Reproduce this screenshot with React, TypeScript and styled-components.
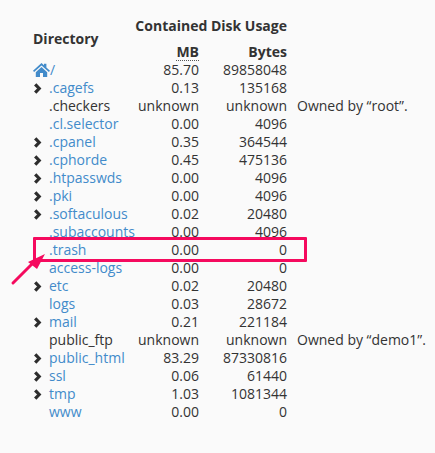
import React from 'react';
import styled, { createGlobalStyle } from 'styled-components';

const GlobalStyle = createGlobalStyle`
  html, body {
    margin: 0;
    padding: 0;
    background: #fafafa;
  }
  body {
    font-family: "Open Sans", sans-serif;
    font-size: 14px;
    color: #333;
  }
`;

const Page = styled.div`
  position: relative;
  width: 435px;
  height: 453px;
  overflow: hidden;
  padding: 17px 0 0 33px;
  box-sizing: border-box;
`;

const UsageTable = styled.table`
  border-collapse: collapse;
  table-layout: fixed;
  width: 402px;
`;

const HeadCell = styled.th<{ $align?: string }>`
  padding: 0;
  height: 18px;
  line-height: 18px;
  font-weight: 700;
  color: #333;
  text-align: ${props => props.$align || 'right'};
  white-space: nowrap;
`;

const SpacerRow = styled.tr`
  height: 8px;
`;

const SpacerCell = styled.th`
  padding: 0;
  height: 8px;
  line-height: 0;
`;

const Unit = styled.span<{ $dotted?: boolean }>`
  display: inline-block;
  line-height: 17px;
  border-bottom: 1px dotted ${props => (props.$dotted ? '#555' : 'transparent')};
`;

const Row = styled.tr`
  height: 18px;
`;

const NameCell = styled.td`
  padding: 0;
  line-height: 18px;
  white-space: nowrap;
`;

const NameWrap = styled.div`
  display: flex;
  align-items: center;
  height: 18px;
`;

const IconSlot = styled.span`
  display: flex;
  align-items: center;
  width: 16px;
  flex: none;
`;

const DirLink = styled.a<{ $plain?: boolean }>`
  color: ${props => (props.$plain ? '#333' : '#428bca')};
  text-decoration: none;
`;

const NumCell = styled.td`
  padding: 0;
  line-height: 18px;
  text-align: right;
  white-space: nowrap;
`;

const NoteCell = styled.td`
  padding: 0 0 0 10px;
  line-height: 18px;
  white-space: nowrap;
`;

const Highlight = styled.div`
  position: absolute;
  left: 33px;
  top: 237px;
  width: 274px;
  height: 25px;
  box-sizing: border-box;
  border: 3px solid #f50a5e;
  border-radius: 1px;
`;

const ArrowMark = styled.svg`
  position: absolute;
  left: 10px;
  top: 250px;
`;

const Chevron = () => (
  <svg width="9" height="11" viewBox="0 0 9 11">
    <path d="M2.2 1.3 L6.2 5.5 L2.2 9.7" fill="none" stroke="#2d2d2d" strokeWidth="3.2" />
  </svg>
);

const HomeIcon = () => (
  <svg width="17" height="14" viewBox="0 0 17 14">
    <path
      fill="#428bca"
      d="M8.5 0 L11 2.3 V0.8 H13.4 V4.5 L17 7.8 L15.9 9.1 L8.5 2.4 L1.1 9.1 L0 7.8 Z M2.8 9.2 L8.5 4 L14.2 9.2 V14 H10 V10 H7 V14 H2.8 Z"
    />
  </svg>
);

type Dir = {
  name: string;
  mb: string;
  bytes: string;
  expand?: boolean;
  plain?: boolean;
  note?: string;
};

const dirs: Dir[] = [
  { name: '.cagefs', mb: '0.13', bytes: '135168', expand: true },
  { name: '.checkers', mb: 'unknown', bytes: 'unknown', plain: true, note: 'Owned by “root”.' },
  { name: '.cl.selector', mb: '0.00', bytes: '4096' },
  { name: '.cpanel', mb: '0.35', bytes: '364544', expand: true },
  { name: '.cphorde', mb: '0.45', bytes: '475136', expand: true },
  { name: '.htpasswds', mb: '0.00', bytes: '4096', expand: true },
  { name: '.pki', mb: '0.00', bytes: '4096', expand: true },
  { name: '.softaculous', mb: '0.02', bytes: '20480', expand: true },
  { name: '.subaccounts', mb: '0.00', bytes: '4096' },
  { name: '.trash', mb: '0.00', bytes: '0' },
  { name: 'access-logs', mb: '0.00', bytes: '0' },
  { name: 'etc', mb: '0.02', bytes: '20480', expand: true },
  { name: 'logs', mb: '0.03', bytes: '28672' },
  { name: 'mail', mb: '0.21', bytes: '221184', expand: true },
  { name: 'public_ftp', mb: 'unknown', bytes: 'unknown', plain: true, note: 'Owned by “demo1”.' },
  { name: 'public_html', mb: '83.29', bytes: '87330816', expand: true },
  { name: 'ssl', mb: '0.06', bytes: '61440', expand: true },
  { name: 'tmp', mb: '1.03', bytes: '1081344', expand: true },
  { name: 'www', mb: '0.00', bytes: '0' },
];

export default function App() {
  return (
    <>
      <GlobalStyle />
      <Page>
        <UsageTable>
          <colgroup>
            <col style={{ width: 100 }} />
            <col style={{ width: 66 }} />
            <col style={{ width: 88 }} />
            <col />
          </colgroup>
          <thead>
            <tr>
              <HeadCell $align="left" rowSpan={3}>Directory</HeadCell>
              <HeadCell colSpan={2}>Contained Disk Usage</HeadCell>
              <HeadCell />
            </tr>
            <SpacerRow>
              <SpacerCell />
              <SpacerCell />
              <SpacerCell />
            </SpacerRow>
            <tr>
              <HeadCell><Unit $dotted>MB</Unit></HeadCell>
              <HeadCell><Unit>Bytes</Unit></HeadCell>
              <HeadCell />
            </tr>
          </thead>
          <tbody>
            <Row>
              <NameCell>
                <NameWrap>
                  <HomeIcon />
                  <DirLink>/</DirLink>
                </NameWrap>
              </NameCell>
              <NumCell>85.70</NumCell>
              <NumCell>89858048</NumCell>
              <NoteCell />
            </Row>
            {dirs.map(dir => (
              <Row key={dir.name}>
                <NameCell>
                  <NameWrap>
                    <IconSlot>{dir.expand && <Chevron />}</IconSlot>
                    <DirLink $plain={dir.plain}>{dir.name}</DirLink>
                  </NameWrap>
                </NameCell>
                <NumCell>{dir.mb}</NumCell>
                <NumCell>{dir.bytes}</NumCell>
                <NoteCell>{dir.note}</NoteCell>
              </Row>
            ))}
          </tbody>
        </UsageTable>
        <Highlight />
        <ArrowMark width="40" height="36" viewBox="0 0 40 36">
          <path d="M3 33 L23 13" stroke="#f50a5e" strokeWidth="3" strokeLinecap="round" />
          <path d="M35 4 L18 12 L27 19 Z" fill="#f50a5e" />
        </ArrowMark>
      </Page>
    </>
  );
}
